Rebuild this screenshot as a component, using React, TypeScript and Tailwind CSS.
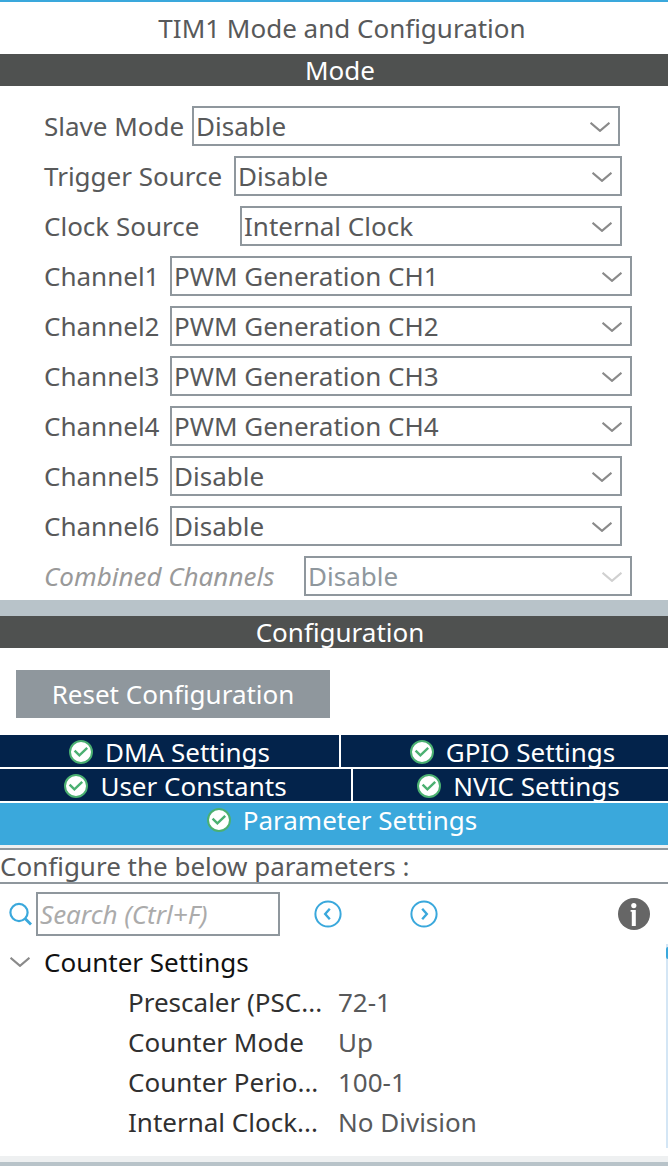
import { useState } from "react";

type Field = {
  id: string;
  label: string;
  options: string[];
  labelWidth: string;
  rightInset: string;
  disabled?: boolean;
};

const FIELDS: Field[] = [
  { id: "slave", label: "Slave Mode", options: ["Disable"], labelWidth: "w-[148px]", rightInset: "pr-12" },
  { id: "trigger", label: "Trigger Source", options: ["Disable"], labelWidth: "w-[190px]", rightInset: "pr-[46px]" },
  { id: "clock", label: "Clock Source", options: ["Internal Clock"], labelWidth: "w-[196px]", rightInset: "pr-[46px]" },
  { id: "ch1", label: "Channel1", options: ["PWM Generation CH1"], labelWidth: "w-[126px]", rightInset: "pr-9" },
  { id: "ch2", label: "Channel2", options: ["PWM Generation CH2"], labelWidth: "w-[126px]", rightInset: "pr-9" },
  { id: "ch3", label: "Channel3", options: ["PWM Generation CH3"], labelWidth: "w-[126px]", rightInset: "pr-9" },
  { id: "ch4", label: "Channel4", options: ["PWM Generation CH4"], labelWidth: "w-[126px]", rightInset: "pr-9" },
  { id: "ch5", label: "Channel5", options: ["Disable"], labelWidth: "w-[126px]", rightInset: "pr-[46px]" },
  { id: "ch6", label: "Channel6", options: ["Disable"], labelWidth: "w-[126px]", rightInset: "pr-[46px]" },
  { id: "combined", label: "Combined Channels", options: ["Disable"], labelWidth: "w-[260px]", rightInset: "pr-9", disabled: true },
];

const PARAMETERS = [
  ["Prescaler (PSC...", "72-1"],
  ["Counter Mode", "Up"],
  ["Counter Perio...", "100-1"],
  ["Internal Clock...", "No Division"],
];

function Chevron({ className }: { className: string }) {
  return (
    <svg viewBox="0 0 20 10" className={`h-[10px] w-5 ${className}`} fill="none" stroke="currentColor" strokeWidth="2.2" aria-hidden="true">
      <path d="M0.5 0.8 L10 8.8 L19.5 0.8" />
    </svg>
  );
}

function CheckBadge() {
  return (
    <svg viewBox="0 0 24 24" className="size-6 shrink-0" aria-hidden="true">
      <circle cx="12" cy="12" r="11" fill="#fff" stroke="#4bb071" strokeWidth="2" />
      <path d="M5.6 10.6 L10.4 15.4 L18.2 7.8" fill="none" stroke="#4bb071" strokeWidth="2.4" />
    </svg>
  );
}

function Tab({ label, className }: { label: string; className: string }) {
  return (
    <button type="button" className={`flex h-8 items-center justify-center gap-3 whitespace-nowrap pt-0.5 text-white ${className}`}>
      <CheckBadge />
      {label}
    </button>
  );
}

function SectionBar({ title }: { title: string }) {
  return <h2 className="h-8 bg-[#4f5150] pl-3 text-center leading-8 text-white">{title}</h2>;
}

function ModeField({ field }: { field: Field }) {
  return (
    <div className={`flex items-center pl-11 ${field.rightInset}`}>
      <label
        htmlFor={field.id}
        className={`shrink-0 whitespace-nowrap ${field.labelWidth} ${field.disabled ? "italic text-[#999]" : ""}`}
      >
        {field.label}
      </label>
      <div className="relative min-w-0 flex-1">
        <select
          id={field.id}
          disabled={field.disabled}
          className="block h-10 w-full appearance-none border-2 border-[#8f979d] bg-white pl-0.5 pr-10 opacity-100 disabled:text-[#8f979d]"
        >
          {field.options.map((option) => (
            <option key={option}>{option}</option>
          ))}
        </select>
        <Chevron
          className={`pointer-events-none absolute right-[10px] top-4 ${field.disabled ? "text-[#d0d0d0]" : "text-[#8a8a8a]"}`}
        />
      </div>
    </div>
  );
}

export default function App() {
  const [open, setOpen] = useState(true);

  return (
    <main className="min-h-screen bg-white font-['Noto_Sans',sans-serif] text-[26px] leading-8 text-[#58595a]">
      <header className="border-t-2 border-[#3aa8dc] pb-2.5 pl-4 pt-2.5 text-center">
        <h1>TIM1 Mode and Configuration</h1>
      </header>

      <section>
        <SectionBar title="Mode" />
        <div className="flex flex-col gap-2.5 pb-1 pt-5">
          {FIELDS.map((field) => (
            <ModeField key={field.id} field={field} />
          ))}
        </div>
      </section>

      <div className="h-4 bg-[#b8c3c9]" />

      <section>
        <SectionBar title="Configuration" />
        <div className="px-4 pb-[17px] pt-[22px]">
          <button type="button" className="h-12 w-[314px] whitespace-nowrap bg-[#8f979d] text-white">
            Reset Configuration
          </button>
        </div>

        <nav className="flex flex-col gap-0.5">
          <div className="grid grid-cols-[339fr_327fr] gap-0.5">
            <Tab label="DMA Settings" className="bg-[#03234b]" />
            <Tab label="GPIO Settings" className="bg-[#03234b] pl-4" />
          </div>
          <div className="grid grid-cols-[351fr_315fr] gap-0.5">
            <Tab label="User Constants" className="bg-[#03234b]" />
            <Tab label="NVIC Settings" className="bg-[#03234b] pl-4" />
          </div>
          <div className="bg-[#3aa8dc] pb-2.5">
            <Tab label="Parameter Settings" className="w-full pl-4" />
          </div>
        </nav>

        <div className="h-[3px] bg-[#eef0f1]" />
        <p className="border-y-2 border-[#8f979d]">Configure the below parameters :</p>

        <div className="flex items-center pb-2 pl-2 pr-[18px] pt-2">
          <label htmlFor="search" aria-label="Search" className="w-7 shrink-0">
            <svg viewBox="0 0 24 24" className="size-6" fill="none" stroke="#3aa8dc" aria-hidden="true">
              <circle cx="11" cy="10.5" r="8.6" strokeWidth="2.2" />
              <path d="M17 16.5 L23 22.5" strokeWidth="2.8" />
            </svg>
          </label>
          <input
            id="search"
            type="text"
            placeholder="Search (Ctrl+F)"
            className="h-11 w-[244px] border-2 border-[#8f979d] bg-white pl-0.5 placeholder:italic placeholder:text-[#ababab]"
          />
          <button type="button" aria-label="Previous" className="ml-[34px]">
            <svg viewBox="0 0 28 28" className="size-7" fill="none" stroke="#3aa8dc" strokeWidth="2" aria-hidden="true">
              <circle cx="14" cy="14" r="12.6" />
              <path d="M15.8 8.8 L11.2 14 L15.8 19.2" strokeWidth="2.4" />
            </svg>
          </button>
          <button type="button" aria-label="Next" className="ml-[68px]">
            <svg viewBox="0 0 28 28" className="size-7" fill="none" stroke="#3aa8dc" strokeWidth="2" aria-hidden="true">
              <circle cx="14" cy="14" r="12.6" />
              <path d="M12.2 8.8 L16.8 14 L12.2 19.2" strokeWidth="2.4" />
            </svg>
          </button>
          <button type="button" aria-label="Information" className="ml-auto">
            <svg viewBox="0 0 32 32" className="size-8" aria-hidden="true">
              <circle cx="16" cy="16" r="16" fill="#666" />
              <circle cx="15.8" cy="7.6" r="2.6" fill="#fff" />
              <path d="M12.6 12 H17.8 V28 H13.8 V13.8 H12.6 Z" fill="#fff" />
            </svg>
          </button>
        </div>

        <div className="flex justify-between">
          <div>
            <button
              type="button"
              aria-expanded={open}
              onClick={() => setOpen(!open)}
              className="mb-0.5 flex h-9 items-center gap-3.5 pl-2.5 text-[#111]"
            >
              <Chevron className="text-[#8a8a8a]" />
              Counter Settings
            </button>
            {open && (
              <table className="ml-32 border-collapse">
                <tbody>
                  {PARAMETERS.map(([name, value]) => (
                    <tr key={name} className="h-10">
                      <th scope="row" className="w-[210px] min-w-[210px] whitespace-nowrap p-0 text-left font-normal text-[#303030]">
                        {name}
                      </th>
                      <td className="whitespace-nowrap p-0">{value}</td>
                    </tr>
                  ))}
                </tbody>
              </table>
            )}
          </div>
          <div className="mb-[-6px] w-0.5 bg-[#d4e6f5] pt-[3px]">
            <div className="h-3 rounded-l-full bg-[#3aa8dc]" />
          </div>
        </div>
      </section>

      <footer className="mt-3.5 h-2.5 border-b-4 border-[#b8c3c9] bg-[#eef0f1]" />
    </main>
  );
}
